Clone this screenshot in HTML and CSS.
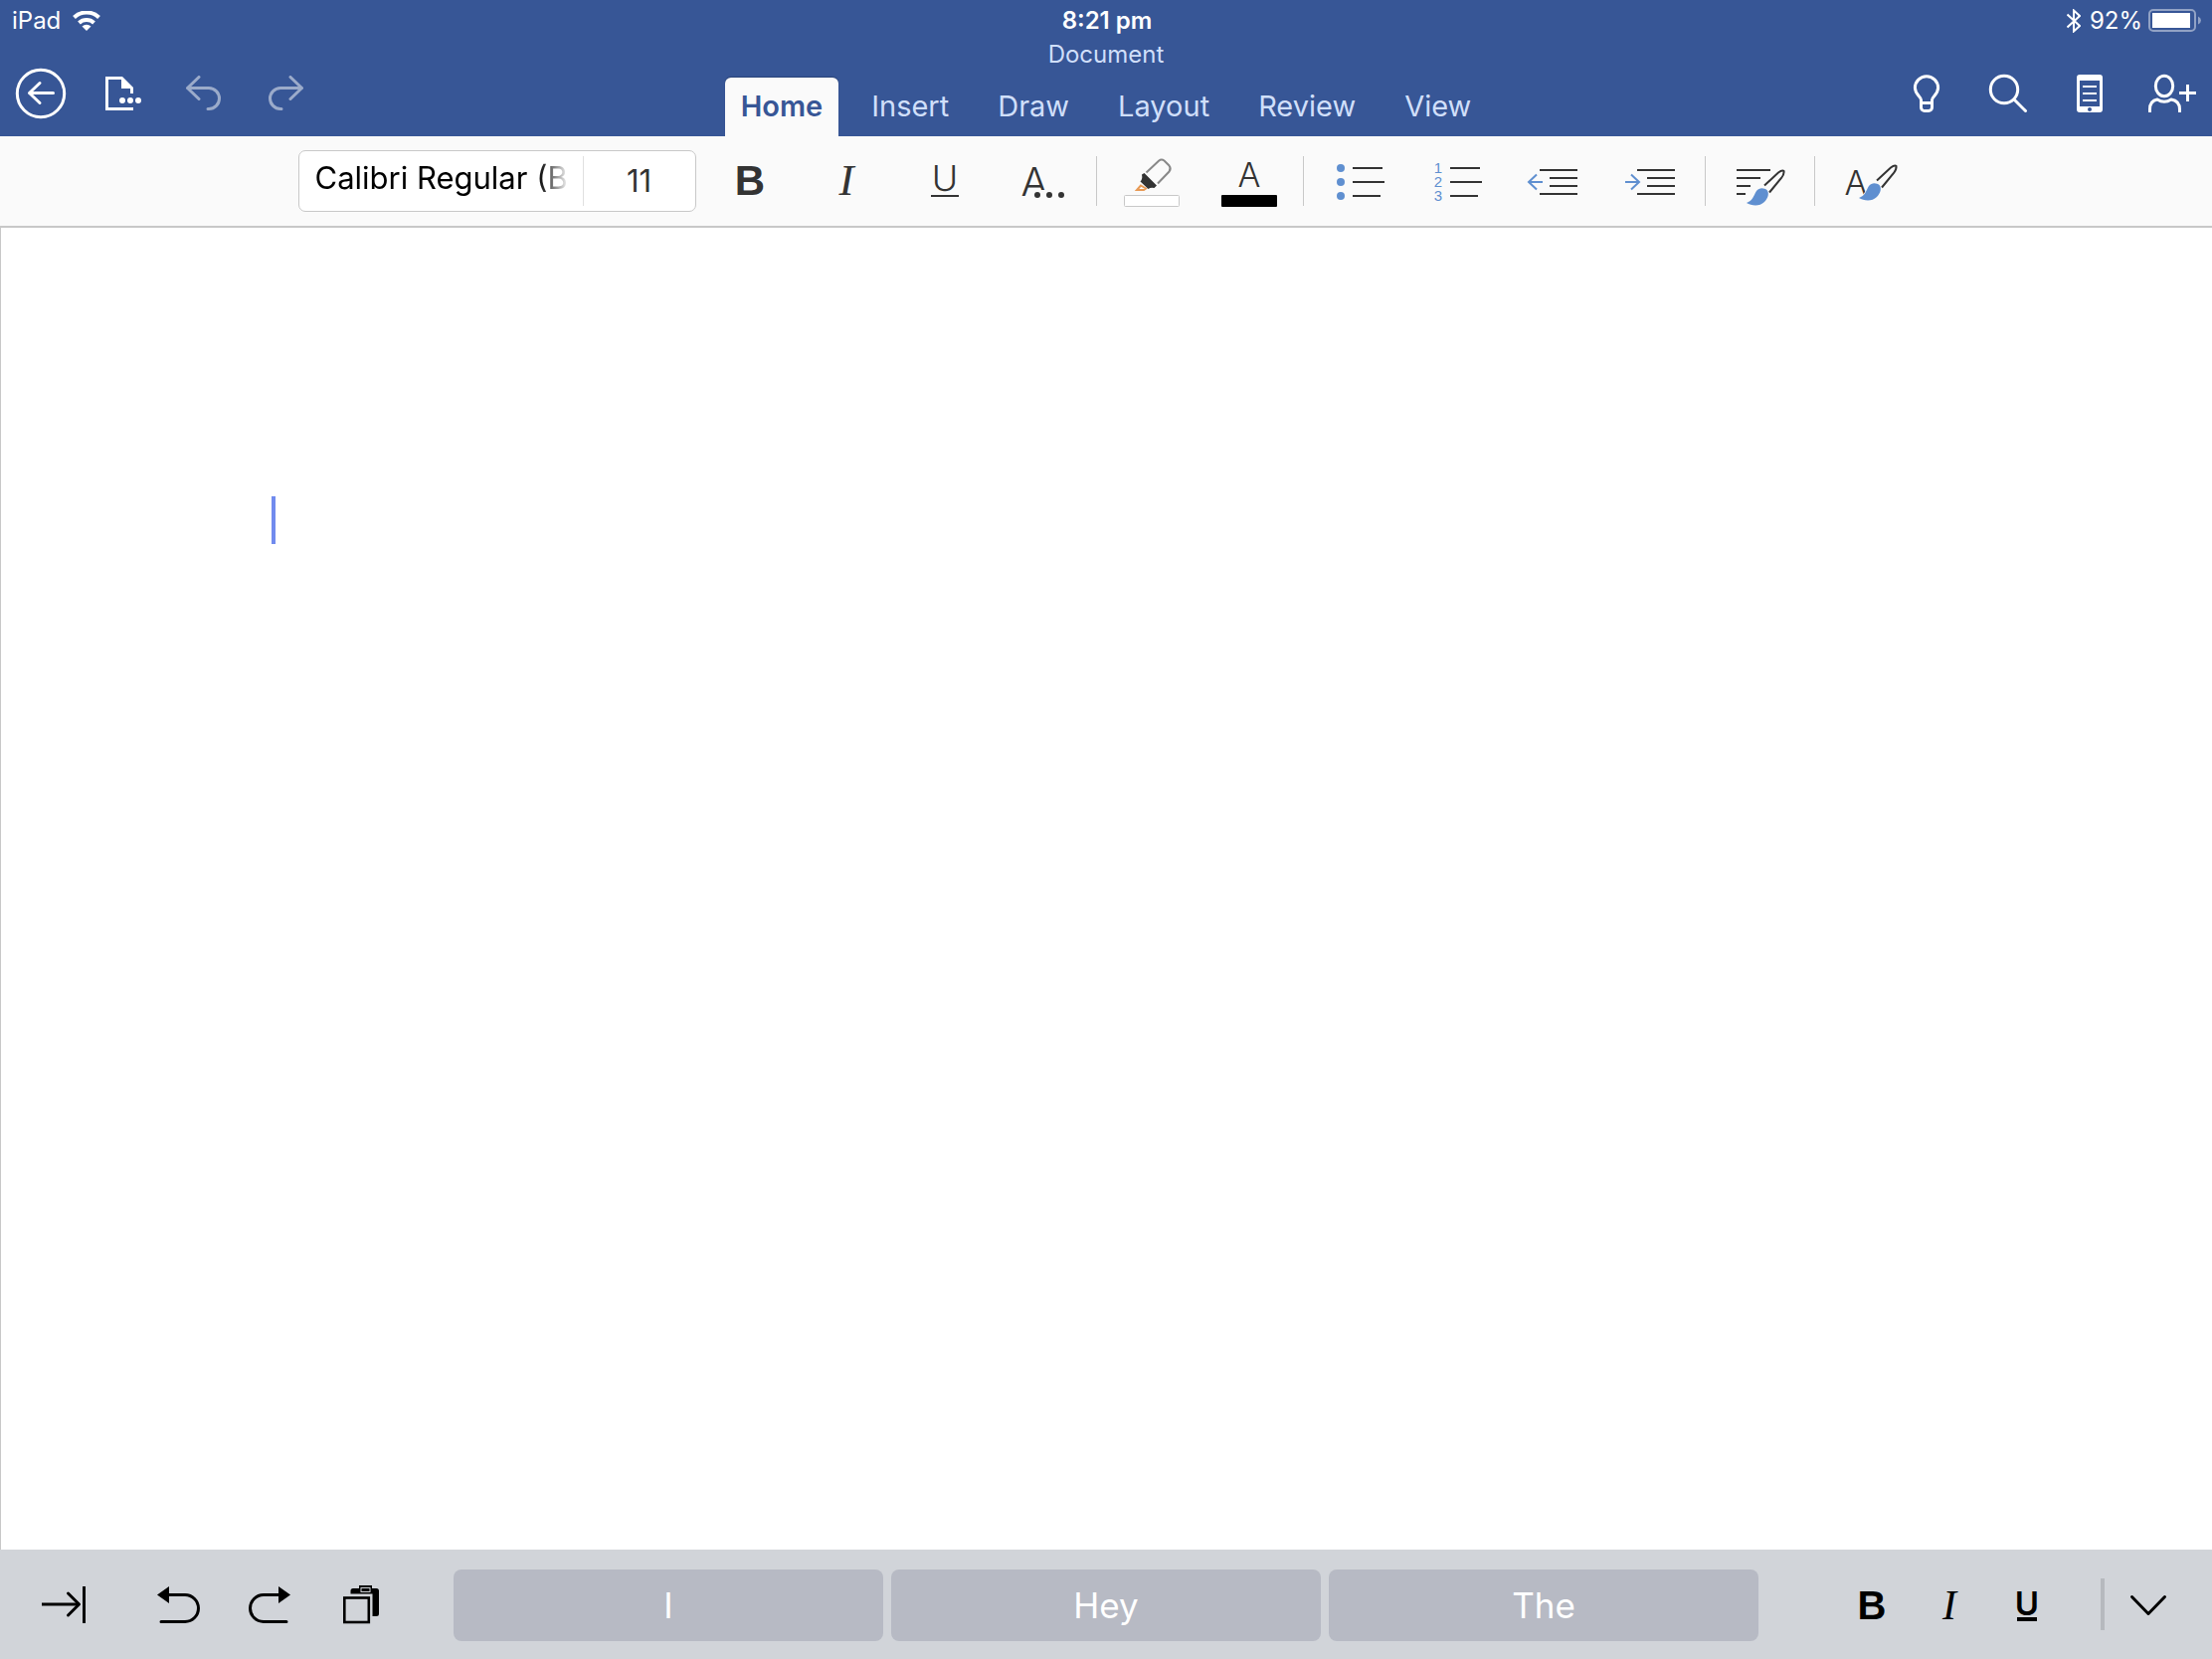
FILE: index.html
```html
<!DOCTYPE html>
<html lang="en">
<head>
<meta charset="utf-8">
<meta name="viewport" content="width=device-width, initial-scale=1">
<title>Document</title>
<link rel="stylesheet" href="styles.css">
</head>
<body>
<svg class="defs" aria-hidden="true">
  <symbol id="brush" viewBox="0 0 60 60">
    <path d="M34 34.500L48 21.500Q52 18.500 53.500 20Q54 23 51 27L39 41.500" fill="none" stroke="#333" stroke-width="2"/>
    <path d="M16 52C22 50 23 45 26 40C29 36 34 37 36.500 39C39 42 38 47 34 51C29 56 21 55 16 52Z" fill="#5f8fd0" stroke="none"/>
  </symbol>
</svg>

<header class="header">
  <div class="status">
    <div class="status-side">
      <span>iPad</span>
      <svg class="wifi" width="28" height="20" viewBox="0 0 28 20" aria-hidden="true">
        <path d="M1.500 6.500A18 18 0 0 1 26.500 6.500" fill="none" stroke="#fff" stroke-width="4"/>
        <path d="M6.500 12A11 11 0 0 1 21.500 12" fill="none" stroke="#fff" stroke-width="4"/>
        <path d="M14 20L9.500 15.500A6.500 6.500 0 0 1 18.500 15.500Z" fill="#fff"/>
      </svg>
    </div>
    <time class="clock">8:21 pm</time>
    <div class="status-side status-end">
      <svg width="14" height="24" viewBox="0 0 14 24" aria-hidden="true">
        <path d="M.5 5.500L13 17L7 22.500V1.500L13 7L.5 18.500" fill="none" stroke="#fff" stroke-width="2"/>
      </svg>
      <span class="percent">92%</span>
      <svg width="54" height="24" viewBox="0 0 54 24" aria-hidden="true">
        <rect x="1" y="1" width="46" height="21" rx="4" fill="none" stroke="#fff" stroke-opacity=".45" stroke-width="2"/>
        <rect x="4" y="4" width="38" height="15" fill="#fff"/>
        <path d="M50 7.500Q53 9 53 11.500T50 15.500Z" fill="#fff" fill-opacity=".45"/>
      </svg>
    </div>
  </div>

  <div class="header-main">
    <div class="actions">
      <button class="action" aria-label="Back"><svg class="icon light" viewBox="0 0 60 60"><circle cx="30" cy="30" r="23.700"/><path class="round" d="M42.500 29.500H18.500M29 19.500L18.500 29.500L29 39.500"/></svg></button>
      <button class="action" aria-label="File"><svg class="icon light" viewBox="0 0 60 60"><path d="M30 14.500H14.500V45.500H41M39.500 24V30"/><path class="solid" d="M29 13H30L41 24V25H29Z"/><g class="solid"><circle cx="30" cy="37" r="3"/><circle cx="38" cy="37" r="3"/><circle cx="46" cy="37" r="3"/></g></svg></button>
      <button class="action" aria-label="Undo" disabled><svg class="icon light" viewBox="0 0 60 60"><path class="round" d="M25 13.500L13.500 24.500L25 35.500M13.500 24.500H35A10.500 10.500 0 0 1 35 45.500H34"/></svg></button>
      <button class="action" aria-label="Redo" disabled><svg class="icon light" viewBox="0 0 60 60"><path class="round" d="M35 13.500L46.500 24.500L35 35.500M46.500 24.500H25A10.500 10.500 0 0 0 25 45.500H26"/></svg></button>
    </div>

    <div class="center">
      <h1 class="title">Document</h1>
      <nav class="tabs" aria-label="Ribbon">
        <a class="tab current" href="#home" aria-current="page">Home</a>
        <a class="tab" href="#insert">Insert</a>
        <a class="tab" href="#draw">Draw</a>
        <a class="tab" href="#layout">Layout</a>
        <a class="tab" href="#review">Review</a>
        <a class="tab" href="#view">View</a>
      </nav>
    </div>

    <div class="actions actions-end">
      <button class="action" aria-label="Tell me"><svg class="icon light" viewBox="0 0 60 60"><path d="M24.500 40V36.500C24.500 33 18.400 31 18.400 24.300A11.600 11.600 0 0 1 41.600 24.300C41.600 31 35.500 33 35.500 36.500V44A3.500 3.500 0 0 1 32 47.500H28A3.500 3.500 0 0 1 24.500 44V39.500H35.500"/></svg></button>
      <button class="action" aria-label="Search"><svg class="icon light" viewBox="0 0 60 60"><circle cx="26" cy="26" r="13.700"/><path class="round" d="M36 36L47.500 47.500"/></svg></button>
      <button class="action" aria-label="Mobile view"><svg class="icon light" viewBox="0 0 60 60"><path class="solid" fill-rule="evenodd" d="M20 11H40A3 3 0 0 1 43 14V46A3 3 0 0 1 40 49H20A3 3 0 0 1 17 46V14A3 3 0 0 1 20 11ZM20 17V43H40V17ZM30 44A2 2 0 0 0 30 48A2 2 0 0 0 30 44Z"/><path class="thin" d="M23 23H37M23 30H37M23 37H37"/></svg></button>
      <button class="action" aria-label="Share"><svg class="icon light" viewBox="0 0 60 60"><ellipse cx="23" cy="22.500" rx="8.700" ry="10.200"/><path d="M8.500 49V46C8.500 41 10 37 16 36Q23 40.500 30 36C36.500 37 38.500 41 38.500 46V49M46.500 21V38M38 29.500H55"/></svg></button>
    </div>
  </div>
</header>

<div class="toolbar" role="toolbar" aria-label="Formatting">
  <div class="font-box">
    <div class="font-name">
      <select class="picker" aria-label="Font"><option>Calibri Regular (Body)</option></select>
    </div>
    <div class="font-size">
      <select class="picker" aria-label="Font size"><option>11</option></select>
    </div>
  </div>
  <button class="tool" aria-label="Bold"><svg class="icon dark" viewBox="0 0 60 60"><text class="bold-42" x="30" y="44">B</text></svg></button>
  <button class="tool" aria-label="Italic"><svg class="icon dark" viewBox="0 0 60 60"><text class="italic-45" x="29" y="44">I</text></svg></button>
  <button class="tool" aria-label="Underline"><svg class="icon dark" viewBox="0 0 60 60"><text class="light-36" x="30" y="40">U</text><path d="M16 45H44"/></svg></button>
  <button class="tool" aria-label="More formatting"><svg class="icon dark" viewBox="0 0 60 60"><text class="light-40" x="22" y="45">A</text><path class="mask" d="M19 39H60V52H19Z"/><g class="ink"><circle cx="25" cy="44" r="3"/><circle cx="37" cy="44" r="3"/><circle cx="49" cy="44" r="3"/></g></svg></button>
  <span class="rule"></span>
  <button class="tool" aria-label="Highlight"><svg class="icon dark" viewBox="0 0 60 60"><path d="M24.500 21.500L37 9.800Q39.700 7.500 42.500 9.500L47.500 14.500Q49.800 17.500 47.500 20.500L36 32.500" stroke="#888"/><path d="M19 34.500L15 39H22L24 37.500Z" stroke="#e89a55"/><path class="ink" d="M20 23.500L22.500 22L35 34.500L32.500 37Q29 36 26.500 38L18.500 30.500Q21 28 20 23.500Z"/><rect x="2.500" y="44.500" width="55" height="11" rx="1" fill="#fff" stroke="#c8c8c8" stroke-width="1"/></svg></button>
  <button class="tool" aria-label="Font colour"><svg class="icon dark" viewBox="0 0 60 60"><text class="light-34" x="30" y="36">A</text><rect x="2" y="44" width="56" height="12" rx="1" fill="#000" stroke="none"/></svg></button>
  <span class="rule"></span>
  <button class="tool" aria-label="Bullets"><svg class="icon dark" viewBox="0 0 60 60"><g class="blue"><circle cx="12" cy="17" r="4"/><circle cx="12" cy="31" r="4"/><circle cx="12" cy="45" r="4"/></g><path d="M24 17H54M24 31H56M24 45H52"/></svg></button>
  <button class="tool" aria-label="Numbering"><svg class="icon dark" viewBox="0 0 60 60"><g class="digits"><text x="12" y="22">1</text><text x="12" y="36">2</text><text x="12" y="50">3</text></g><path d="M24 17H54M24 31H56M24 45H52"/></svg></button>
  <button class="tool" aria-label="Decrease indent"><svg class="icon dark" viewBox="0 0 60 60"><path d="M16 19H54M26 27H54M26 35H54M16 43H54"/><path d="M19 31H5M13 23.500L5 31L13 38.500" stroke="#5f8fd0"/></svg></button>
  <button class="tool" aria-label="Increase indent"><svg class="icon dark" viewBox="0 0 60 60"><path d="M16 19H54M26 27H54M26 35H54M16 43H54"/><path d="M4 31H18M10 23.500L18 31L10 38.500" stroke="#5f8fd0"/></svg></button>
  <span class="rule"></span>
  <button class="tool" aria-label="Paragraph formatting"><svg class="icon dark" viewBox="0 0 60 60"><path d="M6 19H40M6 27H30M6 35H20M6 43H15"/><use href="#brush" width="60" height="60"/></svg></button>
  <span class="rule"></span>
  <button class="tool" aria-label="Styles"><svg class="icon dark" viewBox="0 0 60 60"><text class="light-34" x="16" y="44">A</text><path class="mask" d="M21 47L27 38H38V50Z"/><use href="#brush" x="3" y="-5" width="60" height="60"/></svg></button>
</div>

<main class="page" aria-label="Document body"><span class="caret"></span></main>

<footer class="keybar">
  <div class="keys">
    <button class="key tab-key" aria-label="Tab"><svg class="icon black" viewBox="0 0 60 60"><path d="M8 30H46M50.500 12V49"/><path class="round" d="M34.500 19L45.500 30L34.500 41"/></svg></button>
    <button class="key" aria-label="Undo typing"><svg class="icon black" viewBox="0 0 60 60"><path class="round" d="M20 20.500H37A13.500 13.500 0 0 1 37 47.500H13"/><path class="ink" d="M9 20.500L21 12V29Z"/></svg></button>
    <button class="key" aria-label="Redo typing"><svg class="icon black" viewBox="0 0 60 60"><path class="round" d="M40 20.500H24A13.500 13.500 0 0 0 24 47.500H47"/><path class="ink" d="M51 20.500L39 12V29Z"/></svg></button>
    <button class="key" aria-label="Paste"><svg class="icon black" viewBox="0 0 60 60"><rect x="13.300" y="23.500" width="24.500" height="24.500" stroke-width="2.600"/><path class="ink" d="M19.500 19.500V16.500Q19.500 14 22 14H28V11H41V14H45.500Q48 14 48 16.500V39.500Q48 42 45.500 42H41.500V19.500Z"/><rect x="30" y="13.500" width="9" height="4" stroke="#d1d4d9" stroke-width="1"/></svg></button>
  </div>
  <div class="suggestions">
    <button class="suggestion">I</button>
    <button class="suggestion">Hey</button>
    <button class="suggestion">The</button>
  </div>
  <div class="keys keys-end">
    <button class="key narrow" aria-label="Bold"><svg class="icon black" viewBox="0 0 60 60"><text class="bold-40" x="30" y="45">B</text></svg></button>
    <button class="key narrow" aria-label="Italic"><svg class="icon black" viewBox="0 0 60 60"><text class="italic-42" x="30" y="45">I</text></svg></button>
    <button class="key narrow" aria-label="Underline"><svg class="icon black" viewBox="0 0 60 60"><text class="semi-33" x="30" y="41">U</text><path d="M20 45H40" stroke-width="4"/></svg></button>
    <span class="key-rule"></span>
    <button class="key hide-key" aria-label="Hide bar"><svg class="icon black" viewBox="0 0 60 60"><path class="round" d="M13.500 22.500L30 39.500L46.500 22.500"/></svg></button>
  </div>
</footer>
</body>
</html>
```
FILE: styles.css
```css
* { box-sizing: border-box; }

body {
  margin: 0;
  min-height: 100vh;
  display: flex;
  flex-direction: column;
  background: #fff;
  font-family: Inter, "Liberation Sans", sans-serif;
}

button {
  padding: 0;
  border: 0;
  background: none;
  font: inherit;
  color: inherit;
}

.defs { position: absolute; width: 0; height: 0; }

.icon { display: block; width: 60px; height: 60px; fill: none; }
.icon text { stroke: none; text-anchor: middle; }
.light { stroke: #fff; stroke-width: 3; }
.dark { stroke: #333; stroke-width: 2; }
.black { stroke: #000; stroke-width: 3; }
.round { stroke-linecap: round; stroke-linejoin: round; }
.solid { fill: #fff; stroke: none; }
.thin { stroke-width: 2; }
.dark text, .dark .ink { fill: #333; stroke: none; }
.black text, .black .ink { fill: #000; stroke: none; }
.mask { fill: #fafafa; stroke: none; }
.blue { fill: #5f8fd0; stroke: none; }
.dark .digits text { fill: #5f8fd0; font: 15px "Liberation Sans", sans-serif; }
.bold-42 { font: bold 42px "Liberation Sans", sans-serif; }
.bold-40 { font: bold 40px "Liberation Sans", sans-serif; }
.italic-45 { font: italic 45px "Liberation Serif", serif; }
.italic-42 { font: italic 42px "Liberation Serif", serif; }
.light-40 { font-size: 40px; font-weight: 300; }
.light-36 { font-size: 36px; font-weight: 300; }
.light-34 { font-size: 34px; font-weight: 300; }
.semi-33 { font-size: 33px; font-weight: 600; }

/* Header */
.header { background: #375696; color: #fff; }

.status {
  display: grid;
  grid-template-columns: 1fr auto 1fr;
  align-items: center;
  height: 40px;
  padding: 2px 10px 0 12px;
  font-size: 24px;
  line-height: 38px;
}
.status-side { display: flex; align-items: center; gap: 12px; }
.status-end { justify-content: flex-end; gap: 6px; }
.percent { padding-left: 3px; }
.clock { font-weight: 600; }

.header-main {
  display: grid;
  grid-template-columns: 1fr auto 1fr;
  align-items: end;
}
.actions { display: flex; padding-bottom: 2px; }
.actions-end { justify-content: flex-end; }
.action {
  display: flex;
  align-items: center;
  justify-content: center;
  width: 82px;
  height: 82px;
}
.action:disabled { opacity: .5; }

.title {
  margin: 0;
  padding: 1px 0 9px;
  font-size: 24px;
  line-height: 28px;
  font-weight: 400;
  text-align: center;
  color: #d0dffa;
}
.tabs { display: flex; gap: 17px; }
.tab {
  padding: 0 16px 2px;
  border-radius: 6px 6px 0 0;
  font-size: 29px;
  line-height: 57px;
  color: #d0dffa;
  text-decoration: none;
}
.current {
  background: #fafafa;
  color: #375696;
  font-weight: 600;
  box-shadow: 0 -1px 1px #2b4478;
}

/* Formatting bar */
.toolbar {
  display: flex;
  align-items: center;
  justify-content: center;
  height: 92px;
  padding-left: 4px;
  background: #fafafa;
  border-bottom: 2px solid #c8c8c8;
}
.font-box {
  display: flex;
  align-items: center;
  width: 400px;
  height: 62px;
  margin-right: 5px;
  background: #fff;
  border: 1px solid #c8c8c8;
  border-radius: 7px;
}
.font-name {
  flex: 1;
  padding: 0 14px 8px 16px;
}
.font-name .picker {
  -webkit-mask-image: linear-gradient(to right, #000 88%, transparent);
  mask-image: linear-gradient(to right, #000 88%, transparent);
}
.font-size {
  width: 113px;
  border-left: 1px solid #e0e0e0;
}
.picker {
  display: block;
  width: 100%;
  height: 50px;
  padding: 0;
  border: 0;
  appearance: none;
  background: none;
  font: 31px Inter, "Liberation Sans", sans-serif;
  color: #000;
  overflow: hidden;
  text-overflow: clip;
}
.font-size .picker {
  padding-bottom: 2px;
  color: #333;
  text-align: center;
  text-align-last: center;
}
.tool {
  display: flex;
  align-items: center;
  justify-content: center;
  width: 98px;
  height: 62px;
}
.rule {
  width: 1px;
  height: 50px;
  margin: 0 6px 0 5px;
  background: #c8c8c8;
}

/* Page */
.page {
  flex: 1;
  padding: 270px 272px;
  border-left: 1px solid #c8c8c8;
}
.caret { display: block; width: 4px; height: 48px; background: #718bee; }

/* Keyboard shortcut bar */
.keybar {
  display: flex;
  align-items: center;
  height: 110px;
  background: #d1d4d9;
}
.keys { display: flex; align-items: center; padding: 0 47px 0 18px; }
.keys-end { padding: 0 20px 0 75px; }
.key {
  display: flex;
  align-items: center;
  justify-content: center;
  width: 92px;
  height: 72px;
}
.tab-key { margin-right: 23px; }
.narrow { width: 78px; }
.hide-key { width: 88px; }
.key-rule { width: 4px; height: 52px; margin-left: 35px; background: #b6b9be; }
.suggestions {
  flex: 1;
  display: grid;
  grid-template-columns: repeat(3, 1fr);
  gap: 8px;
  padding-top: 2px;
}
.suggestion {
  height: 72px;
  border-radius: 8px;
  background: #b7bac4;
  font-size: 35px;
  color: #fff;
}
```
